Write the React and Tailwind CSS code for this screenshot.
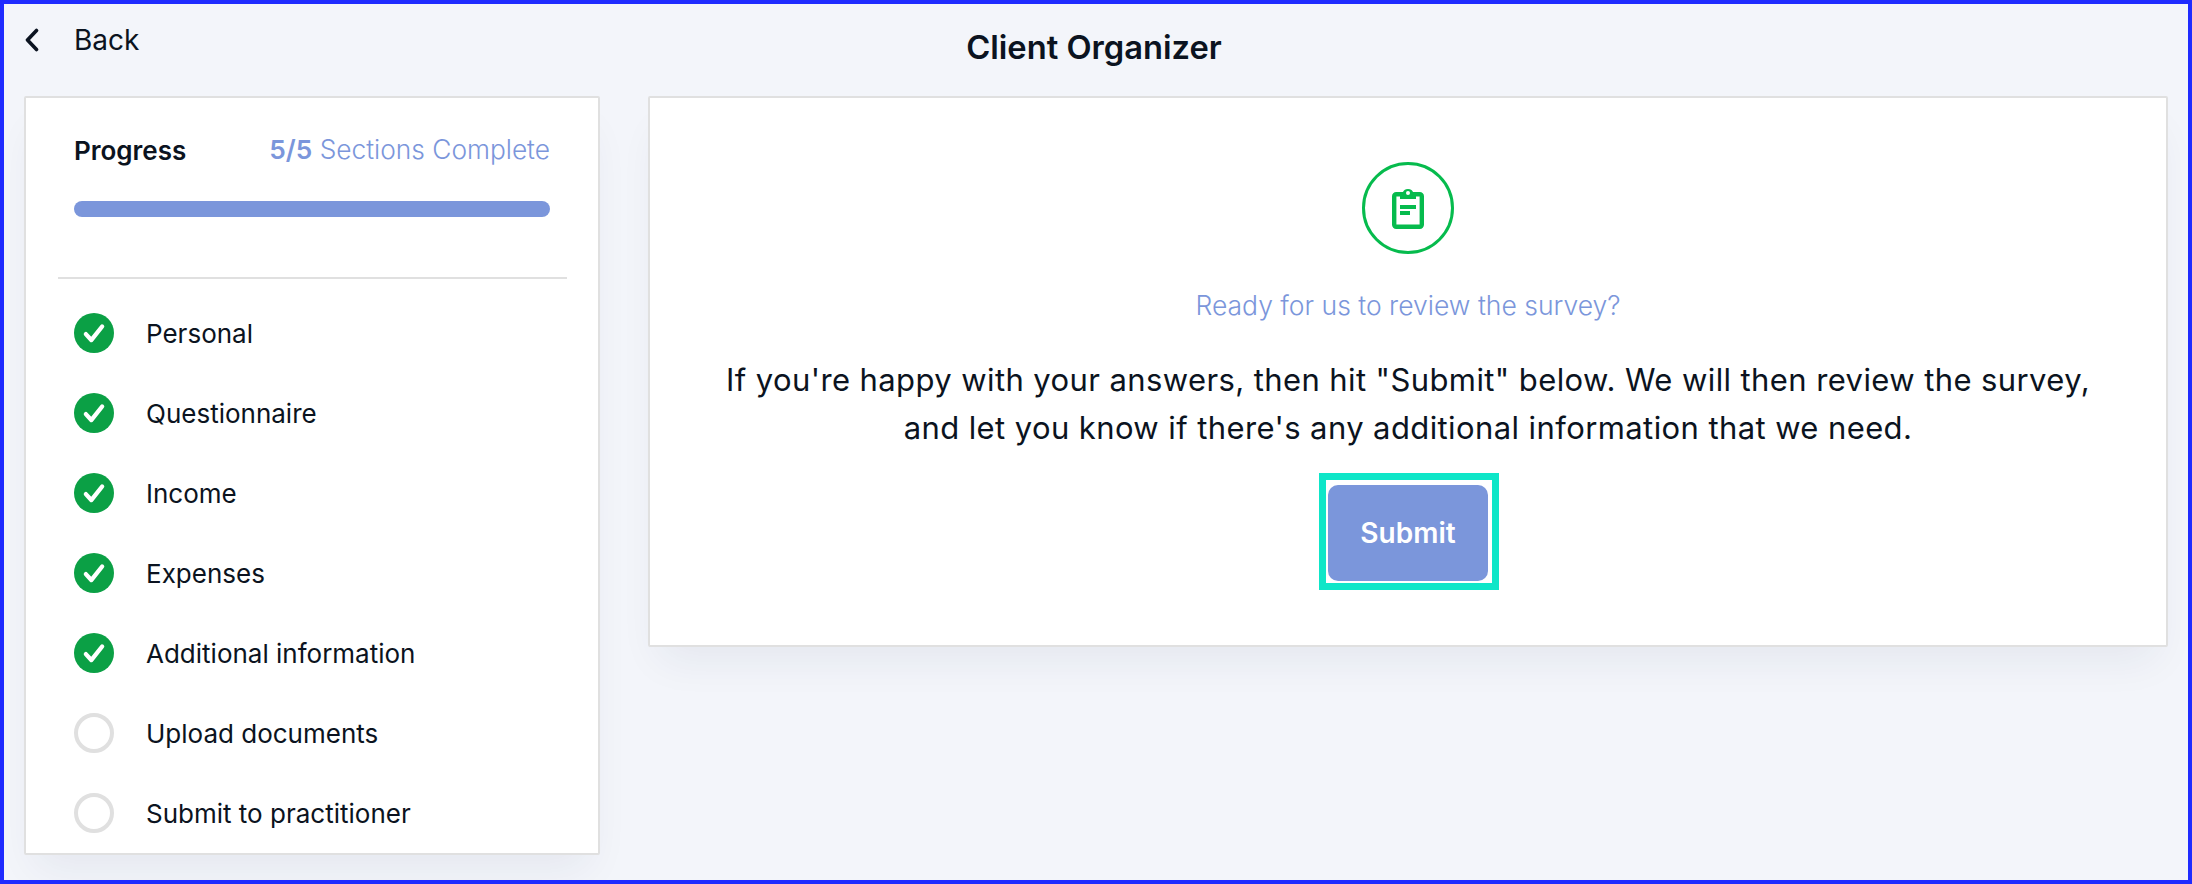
const sections = [
  { name: 'Personal', done: true },
  { name: 'Questionnaire', done: true },
  { name: 'Income', done: true },
  { name: 'Expenses', done: true },
  { name: 'Additional information', done: true },
  { name: 'Upload documents', done: false },
  { name: 'Submit to practitioner', done: false },
];

function StatusIcon({ done }) {
  if (!done) {
    return <span className="w-10 h-10 rounded-full border-4 border-[#e0e0e0] shrink-0" />;
  }
  return (
    <span className="w-10 h-10 rounded-full bg-[#0ba045] shrink-0 flex items-center justify-center">
      <svg width="26" height="26" viewBox="0 0 24 24" fill="none" stroke="white" strokeWidth="4" strokeLinecap="round" strokeLinejoin="round">
        <path d="M4.5 13l5 5.5L19.5 6" />
      </svg>
    </span>
  );
}

function ClipboardIcon() {
  return (
    <svg width="32" height="42" viewBox="0 0 32 42" fill="none" className="text-[#06bb4d]">
      <rect x="2.2" y="7.2" width="27.6" height="32.6" rx="2" stroke="currentColor" strokeWidth="4.4" />
      <path d="M8 12V6h2.6a5.6 5.6 0 0 1 10.8 0H24v6z" fill="currentColor" />
      <circle cx="16" cy="6" r="2" fill="white" />
      <rect x="8" y="18" width="16" height="4" fill="currentColor" />
      <rect x="8" y="24" width="10" height="4" fill="currentColor" />
    </svg>
  );
}

export default function App() {
  return (
    <div className="w-[2192px] h-[884px] border-4 border-[#1f2bff] bg-[#f3f5fa] font-['Inter',sans-serif] text-[#0b1320] overflow-hidden">
      <header className="relative h-[92px]">
        <a className="absolute left-[21px] top-[19px] flex items-center gap-[35px] text-[28px] leading-[34px]">
          <svg width="14" height="24" viewBox="0 0 14 24" fill="none" stroke="#0b1320" strokeWidth="3.6" strokeLinecap="round" strokeLinejoin="round">
            <path d="M11.5 2.5L2.5 12l9 9.5" />
          </svg>
          Back
        </a>
        <h1 className="pt-[25px] pr-[4px] text-center text-[32.7px] leading-[36px] font-semibold">Client Organizer</h1>
      </header>
      <main className="flex items-start gap-[48px] pl-[20px] pr-[20px]">
        <aside className="w-[576px] h-[759px] bg-white border-2 border-[#e0e0e0] rounded-[2px] shadow-[0_24px_40px_-12px_rgba(30,40,80,0.07)] pt-[34px]">
          <div className="pl-[48px] pr-[48px]">
            <div className="flex items-center justify-between h-[36px]">
              <span className="text-[26px] font-semibold">Progress</span>
              <span className="text-[26.3px] font-light text-[#7b96db]"><b className="font-semibold">5/5</b> Sections Complete</span>
            </div>
            <div className="mt-[33px] h-4 rounded-full bg-[#7b96db]" />
          </div>
          <div className="mt-[60px] ml-[32px] mr-[31px] h-[2px] bg-[#e0e0e0]" />
          <ul className="mt-[34px] pl-[48px] pr-[48px] flex flex-col gap-[40px]">
            {sections.map((s) => (
              <li key={s.name} className="flex items-center gap-[32px] h-10 text-[26px]">
                <StatusIcon done={s.done} />
                {s.name}
              </li>
            ))}
          </ul>
        </aside>
        <section className="flex-1 h-[551px] bg-white border-2 border-[#e0e0e0] rounded-[2px] shadow-[0_24px_40px_-12px_rgba(30,40,80,0.07)] flex flex-col items-center pt-[64px]">
          <div className="w-[92px] h-[92px] rounded-full border-[3px] border-[#06bb4d] flex items-center justify-center">
            <ClipboardIcon />
          </div>
          <p className="mt-[33px] text-[26.5px] font-light leading-[36px] text-[#7b96db]">Ready for us to review the survey?</p>
          <p className="mt-[33px] text-center text-[31px] leading-[48px] tracking-[0.013em]">
            If you're happy with your answers, then hit "Submit" below. We will then review the survey,
            <br />
            and let you know if there's any additional information that we need.
          </p>
          <div className="relative mt-[33px]">
            <button className="w-40 h-24 rounded-[10px] bg-[#7b96db] text-white text-[28px] font-semibold">Submit</button>
            <span className="absolute -left-[9px] -right-[11px] -top-[12px] -bottom-[9px] border-[7px] border-[#0ee6c8]" />
          </div>
        </section>
      </main>
    </div>
  );
}
